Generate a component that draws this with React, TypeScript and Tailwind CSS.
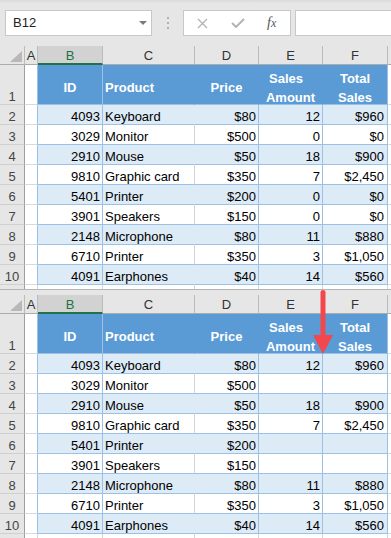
import React from "react";

type Row = { n: number; id: string; product: string; price: string; qty: string; total: string };

const rows: Row[] = [
  { n: 2, id: "4093", product: "Keyboard", price: "$80", qty: "12", total: "$960" },
  { n: 3, id: "3029", product: "Monitor", price: "$500", qty: "0", total: "$0" },
  { n: 4, id: "2910", product: "Mouse", price: "$50", qty: "18", total: "$900" },
  { n: 5, id: "9810", product: "Graphic card", price: "$350", qty: "7", total: "$2,450" },
  { n: 6, id: "5401", product: "Printer", price: "$200", qty: "0", total: "$0" },
  { n: 7, id: "3901", product: "Speakers", price: "$150", qty: "0", total: "$0" },
  { n: 8, id: "2148", product: "Microphone", price: "$80", qty: "11", total: "$880" },
  { n: 9, id: "6710", product: "Printer", price: "$350", qty: "3", total: "$1,050" },
  { n: 10, id: "4091", product: "Earphones", price: "$40", qty: "14", total: "$560" },
];

function Toolbar() {
  return (
    <div className="relative h-[46px] bg-[#e6e6e6] flex items-start pt-[10px] pl-[5px] overflow-hidden">
      <div className="absolute left-0 right-0 top-0 h-[3px] bg-gradient-to-b from-[#d9d9d9] to-[#e6e6e6]" />
      <div className="relative w-[147px] h-[26px] bg-white border border-[#c8c8c8] flex items-center pl-[7px] text-[13px] text-[#222]">
        B12
        <svg className="absolute left-[133px] top-[10px]" width="8" height="4" viewBox="0 0 8 4">
          <polygon points="0,0 8,0 4,4" fill="#7a7a7a" />
        </svg>
      </div>
      <div className="w-[31px] h-[26px] flex flex-col items-center justify-center gap-[3px]">
        <div className="w-[2px] h-[2px] bg-[#b0b0b0]" />
        <div className="w-[2px] h-[2px] bg-[#b0b0b0]" />
        <div className="w-[2px] h-[2px] bg-[#b0b0b0]" />
      </div>
      <div className="w-[108px] h-[26px] bg-white border border-[#c8c8c8] flex items-center">
        <svg className="ml-[13px]" width="11" height="11" viewBox="0 0 11 11">
          <path d="M1 1 L10 10 M10 1 L1 10" stroke="#b4b4b4" strokeWidth="1.4" fill="none" />
        </svg>
        <svg className="ml-[23px]" width="14" height="10" viewBox="0 0 14 10">
          <path d="M1 5 L5 9 L13 1" stroke="#b4b4b4" strokeWidth="2" fill="none" />
        </svg>
        <span className="ml-[22px] font-['Liberation_Serif',serif] italic text-[14px] text-[#555] leading-none">
          f<span className="text-[12px]">x</span>
        </span>
      </div>
      <div className="ml-[4px] flex-1 h-[26px] bg-white border border-r-0 border-[#c8c8c8] -mr-[2px]" />
    </div>
  );
}

function ColumnHeaders() {
  return (
    <>
      <div className="relative bg-[#e6e6e6] border-r border-b border-r-[#bcbcbc] border-b-[#ababab]">
        <svg className="absolute left-[10px] top-[5px]" width="12" height="11" viewBox="0 0 12 11">
          <polygon points="12,0 12,11 0,11" fill="#b8b8b8" />
        </svg>
      </div>
      <div className="bg-[#e6e6e6] border-r border-b border-r-[#bcbcbc] border-b-[#ababab] flex items-center justify-center leading-[15px] text-[#333]">A</div>
      <div className="bg-[#d2d2d2] border-r border-b-2 border-r-[#bcbcbc] border-b-[#217346] flex items-center justify-center leading-[15px] text-[#217346] pt-[1px]">B</div>
      <div className="bg-[#e6e6e6] border-r border-b border-r-[#bcbcbc] border-b-[#ababab] flex items-center justify-center leading-[15px] text-[#333]">C</div>
      <div className="bg-[#e6e6e6] border-r border-b border-r-[#bcbcbc] border-b-[#ababab] flex items-center justify-center leading-[15px] text-[#333]">D</div>
      <div className="bg-[#e6e6e6] border-r border-b border-r-[#bcbcbc] border-b-[#ababab] flex items-center justify-center leading-[15px] text-[#333]">E</div>
      <div className="bg-[#e6e6e6] border-r border-b border-r-[#bcbcbc] border-b-[#ababab] flex items-center justify-center leading-[15px] text-[#333]">F</div>
      <div className="bg-[#e6e6e6] border-b border-b-[#ababab]" />
    </>
  );
}

function HeaderRow() {
  return (
    <>
      <div className="bg-[#e6e6e6] border-r border-b border-r-[#9f9f9f] border-b-[#cfcfcf] flex items-end justify-center leading-[15px] text-[#444]">1</div>
      <div className="bg-white border-r border-b border-r-[#9bc2e6] border-b-[#d9d9d9]" />
      <div className="bg-[#5b9bd5] border-r border-b border-[#9bc2e6] flex items-center justify-center pt-[6px] leading-[19px] font-bold text-white">ID</div>
      <div className="bg-[#5b9bd5] border-r border-b border-r-[#5b9bd5] border-b-[#9bc2e6] flex items-center pl-[2px] pt-[6px] leading-[19px] font-bold text-white">Product</div>
      <div className="bg-[#5b9bd5] border-r border-b border-r-[#5b9bd5] border-b-[#9bc2e6] flex items-center justify-center pt-[6px] leading-[19px] font-bold text-white">Price</div>
      <div className="bg-[#5b9bd5] border-r border-b border-r-[#5b9bd5] border-b-[#9bc2e6] flex flex-col items-center justify-center pt-[6px] leading-[19px] font-bold text-white">
        <span className="pr-[9px]">Sales</span>
        <span>Amount</span>
      </div>
      <div className="bg-[#5b9bd5] border-r border-b border-[#9bc2e6] flex flex-col items-center justify-center pt-[6px] leading-[19px] font-bold text-white">
        <span>Total</span>
        <span>Sales</span>
      </div>
      <div className="bg-white border-b border-b-[#d9d9d9]" />
    </>
  );
}

function DataRow({ r, banded, blank }: { r: Row; banded: boolean; blank: boolean }) {
  const bg = banded ? "bg-[#ddebf7]" : "bg-white";
  const hide = blank && r.qty === "0";
  return (
    <>
      <div className="bg-[#e6e6e6] border-r border-b border-r-[#9f9f9f] border-b-[#cfcfcf] flex items-end justify-center leading-[15px] text-[#444]">{r.n}</div>
      <div className="bg-white border-r border-b border-r-[#9bc2e6] border-b-[#d9d9d9]" />
      <div className={`${bg} border-r border-b border-[#9bc2e6] flex items-end justify-end pr-[2px] leading-[15px] text-black`}>{r.id}</div>
      <div className={`${bg} border-r border-b border-b-[#9bc2e6] ${banded ? "border-r-[#ddebf7]" : "border-r-[#d4d4d4]"} flex items-end pl-[2px] leading-[15px] text-black whitespace-nowrap`}>{r.product}</div>
      <div className={`${bg} border-r border-b border-[#9bc2e6] flex items-end justify-end pr-[2px] leading-[15px] text-black`}>{r.price}</div>
      <div className={`${bg} border-r border-b border-[#9bc2e6] flex items-end justify-end pr-[2px] leading-[15px] text-black`}>{hide ? "" : r.qty}</div>
      <div className={`${bg} border-r border-b border-[#9bc2e6] flex items-end justify-end pr-[3px] leading-[15px] text-black`}>{hide ? "" : r.total}</div>
      <div className="bg-white border-b border-b-[#d9d9d9]" />
    </>
  );
}

function PartialRow() {
  return (
    <>
      <div className="bg-[#e6e6e6] border-r border-r-[#9f9f9f]" />
      <div className="bg-white border-r border-r-[#d4d4d4]" />
      <div className="bg-white border-r border-r-[#d4d4d4]" />
      <div className="bg-white border-r border-r-[#d4d4d4]" />
      <div className="bg-white border-r border-r-[#d4d4d4]" />
      <div className="bg-white border-r border-r-[#d4d4d4]" />
      <div className="bg-white border-r border-r-[#d4d4d4]" />
      <div className="bg-white" />
    </>
  );
}

function Sheet({ blank }: { blank: boolean }) {
  return (
    <div className="grid grid-cols-[25px_13px_65px_92px_64px_64px_65px_1fr] grid-rows-[19px_40px_repeat(9,20px)_4px] text-[13px]">
      <ColumnHeaders />
      <HeaderRow />
      {rows.map((r, i) => (
        <DataRow key={r.n} r={r} banded={i % 2 === 0} blank={blank} />
      ))}
      <PartialRow />
    </div>
  );
}

export default function App() {
  return (
    <div className="w-[391px] h-[538px] overflow-hidden bg-white font-['Liberation_Sans',Arial,sans-serif]">
      <Toolbar />
      <Sheet blank={false} />
      <div className="relative">
        <div className="h-[1px] bg-[#b5b5b5]" />
        <div className="h-[5px] bg-[#e6e6e6]" />
        <Sheet blank={true} />
        <svg className="absolute left-[313px] top-[1px]" width="20" height="65" viewBox="0 0 20 65">
          <line x1="10" y1="2.5" x2="10" y2="47" stroke="#f2474d" strokeWidth="5" strokeLinecap="round" />
          <polygon points="0,45 20,45 10,64" fill="#f2474d" />
        </svg>
      </div>
    </div>
  );
}
